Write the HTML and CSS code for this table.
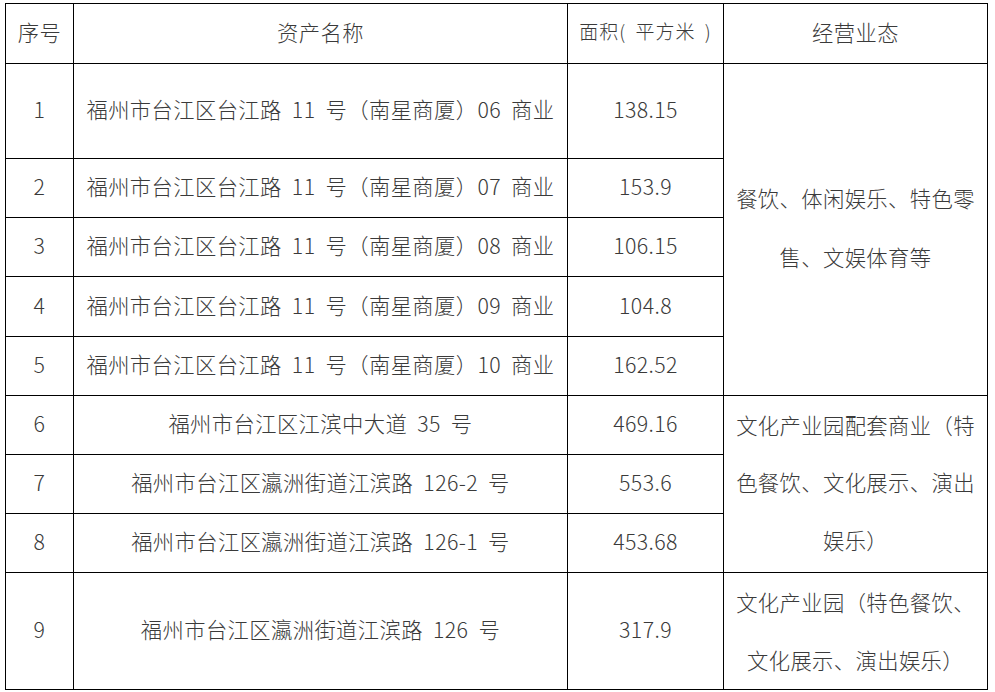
FILE: index.html
```html
<!DOCTYPE html>
<html lang="zh-CN">
<head>
<meta charset="utf-8">
<title>资产清单</title>
<link rel="stylesheet" href="styles.css">
</head>
<body>
<table class="assets">
  <colgroup>
    <col class="c-no">
    <col class="c-name">
    <col class="c-area">
    <col class="c-biz">
  </colgroup>
  <tr class="r-head">
    <td>序号</td>
    <td>资产名称</td>
    <td class="head-area">面积( 平方米 )</td>
    <td>经营业态</td>
  </tr>
  <tr class="r1">
    <td>1</td>
    <td>福州市台江区台江路 11 号（南星商厦）06 商业</td>
    <td>138.15</td>
    <td rowspan="5" class="multi multi-a">餐饮、体闲娱乐、特色零售、文娱体育等</td>
  </tr>
  <tr class="r2">
    <td>2</td>
    <td>福州市台江区台江路 11 号（南星商厦）07 商业</td>
    <td>153.9</td>
  </tr>
  <tr class="r3">
    <td>3</td>
    <td>福州市台江区台江路 11 号（南星商厦）08 商业</td>
    <td>106.15</td>
  </tr>
  <tr class="r4">
    <td>4</td>
    <td>福州市台江区台江路 11 号（南星商厦）09 商业</td>
    <td>104.8</td>
  </tr>
  <tr class="r5">
    <td>5</td>
    <td>福州市台江区台江路 11 号（南星商厦）10 商业</td>
    <td>162.52</td>
  </tr>
  <tr class="r6">
    <td>6</td>
    <td>福州市台江区江滨中大道 35 号</td>
    <td>469.16</td>
    <td rowspan="3" class="multi multi-b">文化产业园配套商业（特色餐饮、文化展示、演出娱乐）</td>
  </tr>
  <tr class="r7">
    <td>7</td>
    <td>福州市台江区瀛洲街道江滨路 126-2 号</td>
    <td>553.6</td>
  </tr>
  <tr class="r8">
    <td>8</td>
    <td>福州市台江区瀛洲街道江滨路 126-1 号</td>
    <td>453.68</td>
  </tr>
  <tr class="r9">
    <td>9</td>
    <td>福州市台江区瀛洲街道江滨路 126 号</td>
    <td>317.9</td>
    <td class="multi multi-c">文化产业园（特色餐饮、文化展示、演出娱乐）</td>
  </tr>
</table>
</body>
</html>
```

FILE: styles.css
```css
html, body {
  margin: 0;
  padding: 0;
  background: #ffffff;
}

body {
  padding: 3px 0 0 5px;
}

.assets {
  table-layout: fixed;
  width: 983px;
  border-collapse: separate;
  border-spacing: 0;
  border-top: 1px solid #000;
  border-left: 1px solid #000;
  font-family: "Noto Sans CJK SC", "Liberation Sans", sans-serif;
  font-weight: 300;
  font-size: 21.3px;
  letter-spacing: 0.4px;
  word-spacing: 5px;
  color: #3a3a3a;
}

.c-no { width: 68px; }
.c-name { width: 494px; }
.c-area { width: 156px; }
.c-biz { width: 264px; }

.assets td {
  box-sizing: border-box;
  border-right: 1px solid #000;
  border-bottom: 1px solid #000;
  padding: 0 4px 4px;
  text-align: center;
  vertical-align: middle;
  line-height: 1.2;
  overflow: hidden;
}

.assets td.head-area {
  font-size: 19px;
  letter-spacing: 1px;
  word-spacing: 4px;
  padding: 0 0 4px;
}

.assets td.multi {
  word-spacing: 0;
  line-height: 57.3px;
}

.assets td.multi-a {
  padding: 0 6px 6px;
  line-height: 59px;
}

.assets td.multi-b {
  padding: 0 6px 4px;
}

.assets td.multi-c {
  padding: 0 6px 1px;
}

.r-head { height: 60px; }
.r1 { height: 95px; }
.r2 { height: 59px; }
.r3 { height: 59px; }
.r4 { height: 60px; }
.r5 { height: 59px; }
.r6 { height: 59px; }
.r7 { height: 59px; }
.r8 { height: 59px; }
.r9 { height: 117px; }
```
